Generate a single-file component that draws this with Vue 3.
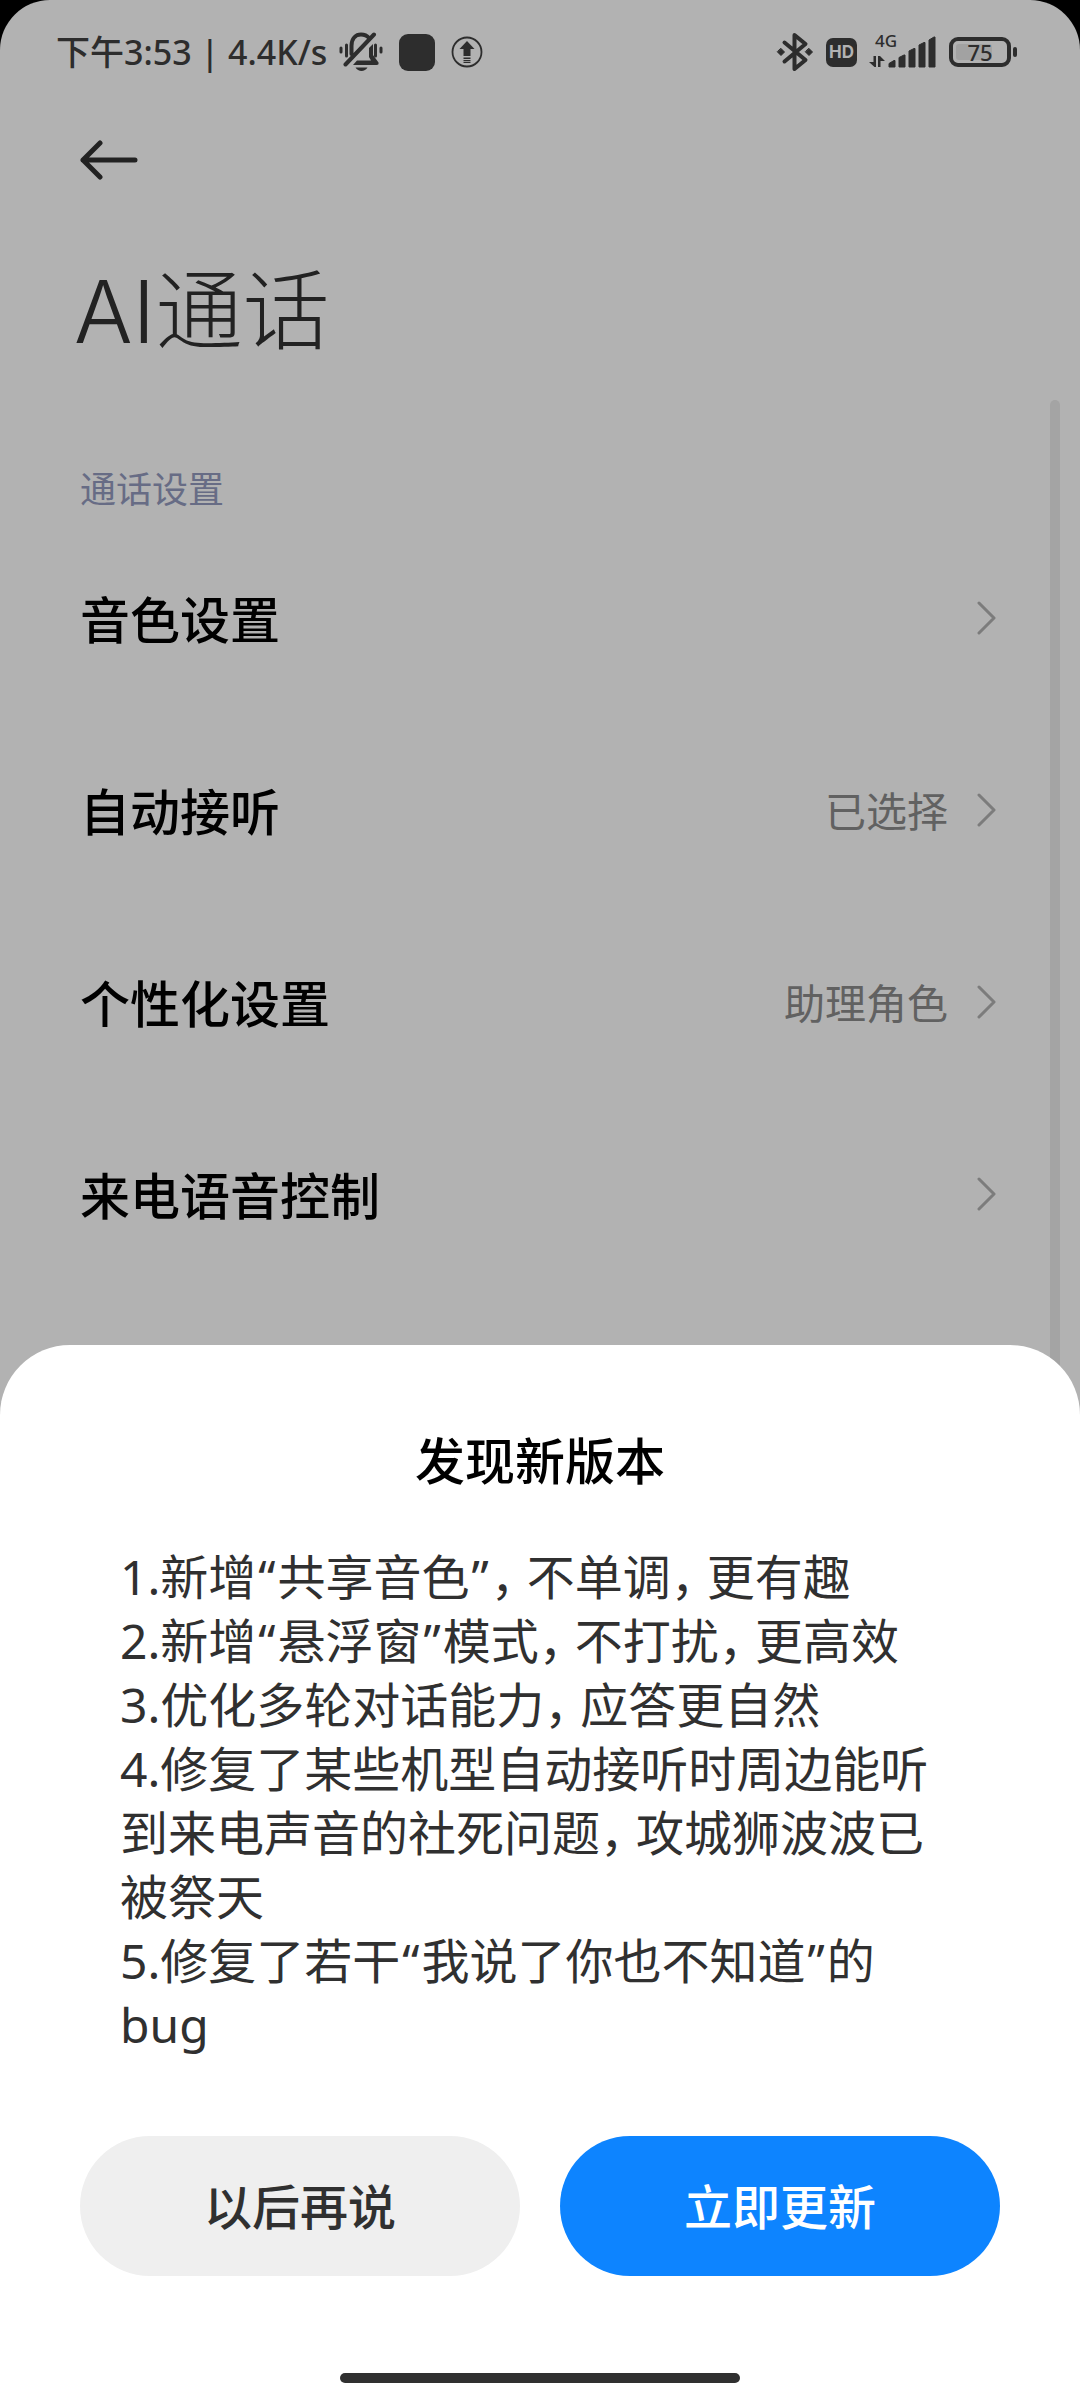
<script setup>
const rows = [
  { label: '音色设置', value: '' },
  { label: '自动接听', value: '已选择' },
  { label: '个性化设置', value: '助理角色' },
  { label: '来电语音控制', value: '' },
]

const markClass = { '，': 'comma', '“': 'quote', '”': 'quote' }

const notes = [
  '1.新增“共享音色”，不单调，更有趣',
  '2.新增“悬浮窗”模式，不打扰，更高效',
  '3.优化多轮对话能力，应答更自然',
  '4.修复了某些机型自动接听时周边能听到来电声音的社死问题，攻城狮波波已被祭天',
  '5.修复了若干“我说了你也不知道”的bug',
].map((note) => note.split(/([，“”])/).filter(Boolean))
</script>

<template>
  <div class="screen">
    <header class="status">
      <span class="clock">下午3:53 | 4.4K/s</span>
      <svg class="bell" width="44" height="40" viewBox="0 0 44 40" fill="none" stroke="#2d2d2d" stroke-width="4" stroke-linecap="round">
        <path d="M2 16v4M7.500 13v11M42 16v4M36.500 13v11" stroke-width="3" />
        <path d="M12.500 22V14C12.500 6 17 2.500 22 2.500C25.500 2.500 28 3.500 30 6M6.500 32.500L35 2.500" />
        <path d="M34 12V23L39.500 30.500Q40 33 37.500 33H14L18 28.500H32L30 25V16Z" fill="#2d2d2d" stroke="none" />
        <path d="M16.500 35.500H28.500C26 40 19 40 16.500 35.500Z" fill="#2d2d2d" stroke="none" />
      </svg>
      <span class="app-square"></span>
      <svg width="32" height="32" viewBox="0 0 32 32" fill="#2d2d2d">
        <circle cx="16" cy="16" r="14.500" fill="none" stroke="#2d2d2d" stroke-width="1.800" />
        <path d="M16 5L23.500 13H19.500V20H12.500V13H8.500ZM12.500 21.500h7v1.500h-7ZM12.500 24h7v1.200h-7ZM12.500 26h7v1h-7Z" />
      </svg>
      <span class="status-right">
        <svg width="38" height="40" viewBox="0 0 38 40" fill="none" stroke="#2d2d2d" stroke-width="4" stroke-linejoin="round" stroke-linecap="round">
          <path d="M8.500 10.500L29.500 28L18.500 37V3L29.500 12L8.500 29.500" />
          <path d="M5 16.500L8.500 20L5 23.500L1.500 20ZM33 16.500L36.500 20L33 23.500L29.500 20Z" fill="#2d2d2d" stroke="#2d2d2d" stroke-width="1" />
        </svg>
        <span class="hd">HD</span>
        <span class="net">
          <span class="gen">4G</span>
          <svg width="68" height="32" viewBox="0 0 68 32" fill="#2d2d2d">
            <path d="M20 31V27.500L25 24.500h1v6.500ZM30 31V21.500L35 19h1V31ZM40 31V15L45 12.500h1V31ZM50 31V9L55 6.500h1V31ZM60 31V4L65 1h1V31Z" stroke="#2d2d2d" stroke-linejoin="round" stroke-width="1" />
            <path d="M4.500 20h2.500v11H5.500L0 26h4.500ZM9 20h2l5 5h-4.500v6H9Z" />
          </svg>
        </span>
        <span class="battery"><span class="charge"></span><span class="percent">75</span></span>
      </span>
    </header>

    <main class="page">
      <button class="back" type="button" aria-label="返回">
        <svg width="60" height="40" viewBox="0 0 60 40" fill="none" stroke="#222" stroke-width="5" stroke-linecap="round" stroke-linejoin="round">
          <path d="M20 3L3 20L20 37M3 20H55" />
        </svg>
      </button>
      <h1>AI通话</h1>
      <h2>通话设置</h2>
      <button v-for="row in rows" :key="row.label" class="row" type="button">
        <span class="label">{{ row.label }}</span>
        <span class="value">{{ row.value }}</span>
        <svg width="20" height="34" viewBox="0 0 20 34" fill="none" stroke="#7c7c7c" stroke-width="3" stroke-linecap="round" stroke-linejoin="round">
          <path d="M2 2L17 17L2 32" />
        </svg>
      </button>
      <div class="scrollbar"></div>
    </main>

    <section class="sheet" role="dialog" aria-labelledby="sheet-title">
      <h3 id="sheet-title">发现新版本</h3>
      <div class="notes">
        <p v-for="(note, i) in notes" :key="i"><span v-for="(part, j) in note" :key="j" :class="markClass[part]">{{ part }}</span></p>
      </div>
      <div class="actions">
        <button type="button" class="later">以后再说</button>
        <button type="button" class="update">立即更新</button>
      </div>
      <div class="home-bar"></div>
    </section>
  </div>
</template>

<style>
body {
  margin: 0;
  background: #000;
}
</style>

<style scoped>
.screen {
  position: relative;
  min-height: 100vh;
  overflow: hidden;
  border-radius: 50px 50px 0 0;
  background: #b2b2b2;
  color: #222;
  font-family: "Noto Sans", "Noto Sans CJK SC", sans-serif;
}

button {
  border: 0;
  padding: 0;
  background: none;
  color: inherit;
  font: inherit;
}

svg {
  display: block;
  flex: none;
}

h1,
h2,
h3,
p {
  margin: 0;
}

.status {
  display: flex;
  align-items: center;
  height: 104px;
  padding: 0 63px 0 56px;
  color: #2d2d2d;
}

.clock {
  font-size: 34px;
  font-weight: 500;
  line-height: 48px;
  white-space: nowrap;
}

.bell {
  margin-left: 12px;
}

.app-square {
  width: 36px;
  height: 37px;
  margin: 0 16px;
  border-radius: 9px;
  background: #2d2d2d;
}

.status-right {
  display: flex;
  align-items: center;
  margin-left: auto;
}

.hd {
  width: 31px;
  margin: 0 12px;
  border-radius: 7px;
  background: #2d2d2d;
  color: #b2b2b2;
  font-family: Inter, sans-serif;
  font-size: 17px;
  font-weight: 700;
  line-height: 29px;
  text-align: center;
}

.net {
  position: relative;
  margin-right: 12px;
}

.gen {
  position: absolute;
  top: -5px;
  left: 6px;
  font-size: 17px;
  font-weight: 500;
  line-height: 20px;
}

.battery {
  position: relative;
  display: flex;
  box-sizing: border-box;
  width: 62px;
  height: 30px;
  margin-right: 6px;
  padding: 3px;
  border: 4px solid #2d2d2d;
  border-radius: 9px;
}

.battery::after {
  content: "";
  position: absolute;
  top: 6px;
  right: -10px;
  width: 4px;
  height: 10px;
  border-radius: 2px;
  background: #2d2d2d;
}

.charge {
  width: 75%;
  border-radius: 3px;
  background: #a2a2a2;
}

.percent {
  position: absolute;
  inset: 0;
  font-size: 22px;
  font-weight: 500;
  line-height: 22px;
  text-align: center;
}

.page {
  position: relative;
  padding: 36px 80px 120px;
}

.back {
  display: block;
}

h1 {
  margin: 66px -6px 0;
  font-family: Inter, "Noto Sans CJK SC", sans-serif;
  font-size: 87px;
  font-weight: 300;
  line-height: 132px;
}

h2 {
  margin-top: 88px;
  color: #676c85;
  font-size: 36px;
  font-weight: 400;
  line-height: 48px;
}

.row {
  display: flex;
  align-items: center;
  box-sizing: border-box;
  width: 100%;
  height: 192px;
  padding-right: 3px;
  text-align: left;
}

h2 + .row {
  margin-top: 8px;
}

.label {
  flex: 1;
  padding-bottom: 2px;
  color: #000;
  font-size: 50px;
  font-weight: 500;
}

.value {
  margin-right: 29px;
  padding-bottom: 2px;
  color: #616161;
  font-size: 41px;
}

.scrollbar {
  position: absolute;
  top: 296px;
  right: 20px;
  bottom: 0;
  width: 10px;
  border-radius: 5px;
  background: #a4a4a4;
}

.sheet {
  position: absolute;
  right: 0;
  bottom: 0;
  left: 0;
  padding: 80px 80px 17px;
  border-radius: 70px 70px 0 0;
  background: #fff;
}

h3 {
  color: #000;
  font-size: 50px;
  font-weight: 500;
  line-height: 72px;
  text-align: center;
}

.notes {
  margin-top: 48px;
  padding: 0 52px 0 40px;
  color: #303030;
  font-size: 48px;
  line-height: 64px;
}

.comma {
  margin-right: 12px;
  font-feature-settings: "halt";
}

.quote {
  margin: 0 2px;
}

.actions {
  display: flex;
  gap: 40px;
  margin-top: 79px;
}

.actions button {
  flex: 1;
  height: 140px;
  padding-bottom: 4px;
  border-radius: 70px;
  font-size: 48px;
  font-weight: 500;
}

.actions .later {
  background: #efefef;
  color: #303030;
}

.actions .update {
  background: #0d84ff;
  color: #fff;
}

.home-bar {
  width: 400px;
  height: 10px;
  margin: 97px auto 0;
  border-radius: 5px;
  background: #303030;
}
</style>
